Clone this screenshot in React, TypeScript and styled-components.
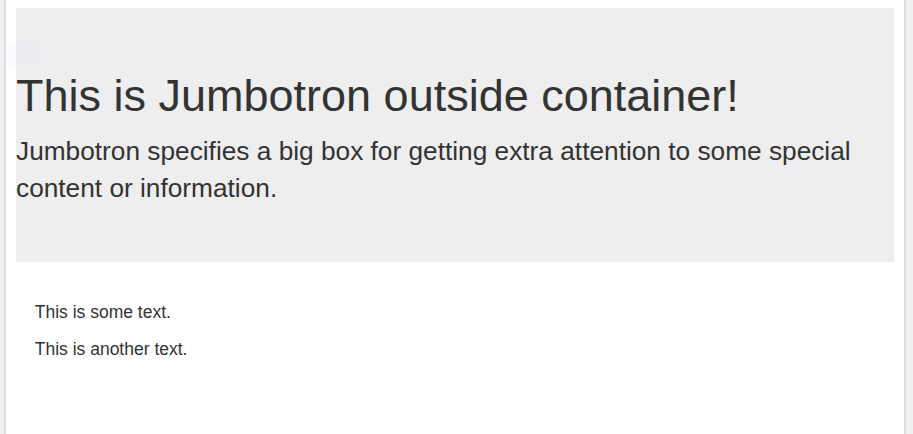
import React from "react";
import styled, { createGlobalStyle } from "styled-components";

const GlobalStyle = createGlobalStyle`
  html, body {
    margin: 0;
    padding: 0;
    background: #f1f1f1;
  }
  body {
    font-family: "Liberation Sans", Arial, Helvetica, sans-serif;
    font-size: 17.5px;
    line-height: 1.42857143;
    color: #333;
  }
  * { box-sizing: border-box; }
`;

const Page = styled.div`
  position: relative;
`;

const Frame = styled.div`
  min-height: 100vh;
  margin: 0 7px 0 4px;
  background: #fff;
  border-left: 2px solid #dcdcdc;
  border-right: 2px solid #dcdcdc;
  padding-top: 8px;
  overflow: hidden;
`;

const Highlight = styled.div`
  position: absolute;
  left: 0;
  top: 43px;
  width: 44px;
  height: 23px;
  background: rgba(220, 235, 255, 0.14);
  pointer-events: none;
`;

const Jumbotron = styled.section`
  margin: 0 10px 37.5px;
  padding: 37.5px 0 36px;
  background: #eee;
`;

const Title = styled.h1`
  margin: 25px 0 12.5px;
  font-size: 45px;
  line-height: 1.1;
  font-weight: 500;
  color: #333;
`;

const Lead = styled.p`
  margin: 0 0 18.75px;
  font-size: 26.25px;
  font-weight: 200;
  line-height: 1.42857143;
`;

const Container = styled.div`
  padding: 0 28.75px;
`;

const Text = styled.p`
  margin: 0 0 12.5px;
`;

export default function App() {
  return (
    <>
      <GlobalStyle />
      <Page>
        <Frame>
          <Jumbotron>
            <Title>This is Jumbotron outside container!</Title>
            <Lead>
              Jumbotron specifies a big box for getting extra attention to some
              special content or information.
            </Lead>
          </Jumbotron>
          <Container>
            <Text>This is some text.</Text>
            <Text>This is another text.</Text>
          </Container>
        </Frame>
        <Highlight />
      </Page>
    </>
  );
}
